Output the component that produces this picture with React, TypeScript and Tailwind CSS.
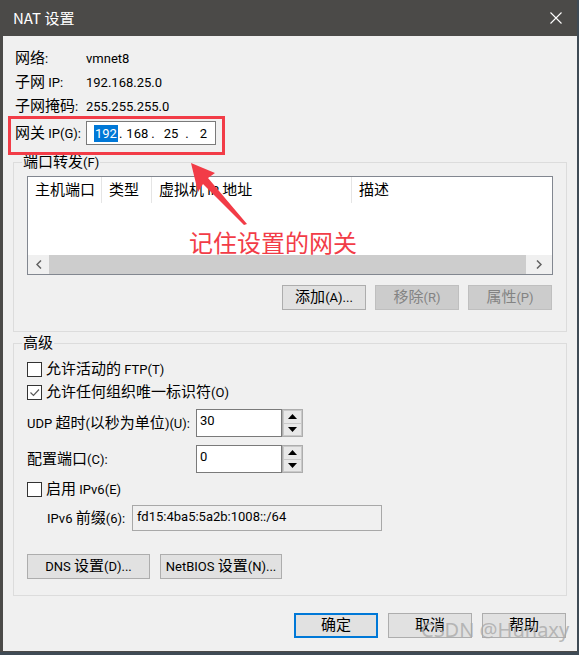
import React from "react";

const ui = "font-['Roboto','Noto_Sans_CJK_SC',sans-serif] text-[13px] leading-[17px] text-black";

// CJK runs render a bit larger than the Latin ones, as in the Windows UI font;
// a zero line-height keeps them from growing the line box
function T({ children }: { children: string }) {
  return (
    <>
      {children.split(/([\u4e00-\u9fff]+)/).map((s, i) =>
        /[\u4e00-\u9fff]/.test(s) ? (
          <span key={i} className="font-['Noto_Sans_CJK_SC',sans-serif] text-[15px] leading-[0px]">
            {s}
          </span>
        ) : (
          s
        )
      )}
    </>
  );
}

function Button({
  children,
  disabled,
  primary,
  className = "w-[84px]",
}: {
  children: string;
  disabled?: boolean;
  primary?: boolean;
  className?: string;
}) {
  const look = primary
    ? "border-2 border-[#0078d7] bg-[#e1e1e1] text-black"
    : disabled
    ? "border border-[#bfbfbf] bg-[#cccccc] text-[#838383]"
    : "border border-[#adadad] bg-[#e1e1e1] text-black";
  return (
    <div className={`flex h-[25px] items-center justify-center ${look} ${className}`}>
      <span>
        <T>{children}</T>
      </span>
    </div>
  );
}

function Checkbox({ checked, label }: { checked?: boolean; label: string }) {
  return (
    <div className="flex h-[20px] items-center">
      <span className="flex h-[15px] w-[15px] shrink-0 items-center justify-center border border-[#333333] bg-white">
        {checked && (
          <svg width="11" height="11" viewBox="0 0 11 11">
            <polyline points="1.5,5.5 4.5,8.5 10,2.5" fill="none" stroke="#5a5a5a" strokeWidth="1.2" />
          </svg>
        )}
      </span>
      <span className="ml-[4px]">
        <T>{label}</T>
      </span>
    </div>
  );
}

function Spin({ value }: { value: string }) {
  return (
    <div className="flex h-[28px]">
      <div className="w-[86px] border border-[#7a7a7a] bg-white pl-[3px] pt-[2px]">{value}</div>
      <div className="flex w-[21px] flex-col gap-[1px] border border-[#adadad] bg-[#c9c9c9] p-[1px]">
        <div className="flex flex-1 items-center justify-center bg-[#e8e8e8]">
          <svg width="9" height="5" viewBox="0 0 9 5">
            <polygon points="4.5,0 9,5 0,5" fill="#000" />
          </svg>
        </div>
        <div className="flex flex-1 items-center justify-center bg-[#e8e8e8]">
          <svg width="9" height="5" viewBox="0 0 9 5">
            <polygon points="0,0 9,0 4.5,5" fill="#000" />
          </svg>
        </div>
      </div>
    </div>
  );
}

export default function App() {
  const info = [
    ["网络:", "vmnet8"],
    ["子网 IP:", "192.168.25.0"],
    ["子网掩码:", "255.255.255.0"],
  ];

  const columns = [
    ["主机端口", "w-[74px]"],
    ["类型", "w-[50px]"],
    ["虚拟机 IP 地址", "w-[200px]"],
  ];

  return (
    <div className={`relative h-[655px] w-[579px] overflow-hidden bg-[#3f4b55] ${ui}`}>
      <div className="flex h-[652px] w-[577px] flex-col bg-[#4b4a48]">
        {/* title bar */}
        <div className="flex h-[36px] shrink-0 items-center justify-between pl-[13px] pr-[15px]">
          <span className="font-['Noto_Sans_CJK_SC',sans-serif] text-[15px] leading-[20px] text-white">NAT 设置</span>
          <svg width="12" height="12" viewBox="0 0 12 12">
            <path d="M0.5 0.5 L11.5 11.5 M11.5 0.5 L0.5 11.5" stroke="#ffffff" strokeWidth="1.1" />
          </svg>
        </div>

        {/* body */}
        <div className="mb-[1px] ml-[3px] flex flex-1 flex-col bg-[#f0f0f0] px-[10px] pt-[10px]">
          <div className="pl-[2px]">
            {info.map(([k, v]) => (
              <div key={k} className="flex h-[24px] items-center">
                <span className="w-[71px]">
                  <T>{k}</T>
                </span>
                <span>{v}</span>
              </div>
            ))}
            <div className="mt-[3px] flex h-[24px] items-center">
              <span className="w-[71px]">
                <T>网关 IP(G):</T>
              </span>
              <div className="flex h-[24px] w-[130px] items-center border border-[#7a7a7a] bg-white">
                <span className="ml-[7px] bg-[#0078d7] px-[1px] text-white">192</span>
                <span className="ml-[1px]">.</span>
                <span className="ml-[4px]">168</span>
                <span className="ml-[3px]">.</span>
                <span className="ml-[9px]">25</span>
                <span className="ml-[7px]">.</span>
                <span className="ml-[11px]">2</span>
              </div>
            </div>
          </div>

          {/* port forwarding */}
          <fieldset className="mt-[9px] border border-[#dcdcdc] p-0">
            <legend className="ml-[8px] px-[1px] leading-[17px]">
              <T>端口转发(F)</T>
            </legend>
            <div className="px-[13px] pb-[21px] pt-[5px]">
              <div className="flex h-[99px] flex-col border border-[#828790] bg-white">
                <div className="flex h-[26px]">
                  {columns.map(([t, w]) => (
                    <div key={t} className={`flex items-center border-r border-[#e5e5e5] pl-[7px] ${w}`}>
                      <span>
                        <T>{t}</T>
                      </span>
                    </div>
                  ))}
                  <div className="flex items-center pl-[7px]">
                    <span>
                      <T>描述</T>
                    </span>
                  </div>
                </div>
                <div className="flex-1" />
                <div className="flex h-[19px] bg-[#f0f0f0]">
                  <div className="flex w-[21px] items-center justify-center">
                    <svg width="6" height="9" viewBox="0 0 6 9">
                      <polyline points="5,0.5 1,4.5 5,8.5" fill="none" stroke="#606060" strokeWidth="1.5" />
                    </svg>
                  </div>
                  <div className="flex-1 bg-[#cdcdcd]" />
                  <div className="flex w-[26px] items-center justify-center">
                    <svg width="6" height="9" viewBox="0 0 6 9">
                      <polyline points="1,0.5 5,4.5 1,8.5" fill="none" stroke="#606060" strokeWidth="1.5" />
                    </svg>
                  </div>
                </div>
              </div>
              <div className="mt-[10px] flex justify-end gap-[9px] pr-[1px]">
                <Button>添加(A)...</Button>
                <Button disabled>移除(R)</Button>
                <Button disabled>属性(P)</Button>
              </div>
            </div>
          </fieldset>

          {/* advanced */}
          <fieldset className="mt-[3px] border border-[#dcdcdc] p-0">
            <legend className="ml-[8px] px-[1px] leading-[17px]">
              <T>高级</T>
            </legend>
            <div className="px-[13px] pb-[16px] pt-[7px]">
              <Checkbox label="允许活动的 FTP(T)" />
              <div className="mt-[3px]">
                <Checkbox checked label="允许任何组织唯一标识符(O)" />
              </div>
              <div className="mt-[7px] flex items-center">
                <span className="w-[169px]">
                  <T>UDP 超时(以秒为单位)(U):</T>
                </span>
                <Spin value="30" />
              </div>
              <div className="mt-[8px] flex items-center">
                <span className="w-[169px]">
                  <T>配置端口(C):</T>
                </span>
                <Spin value="0" />
              </div>
              <div className="mt-[6px]">
                <Checkbox label="启用 IPv6(E)" />
              </div>
              <div className="mt-[6px] flex items-center pl-[20px]">
                <span className="w-[85px]">
                  <T>IPv6 前缀(6):</T>
                </span>
                <div className="h-[26px] w-[250px] border border-[#a8a8a8] bg-[#f0f0f0] pl-[4px] pt-[2px]">
                  fd15:4ba5:5a2b:1008::/64
                </div>
              </div>
              <div className="mt-[23px] flex gap-[10px]">
                <Button className="w-[123px]">DNS 设置(D)...</Button>
                <Button className="w-[122px]">NetBIOS 设置(N)...</Button>
              </div>
            </div>
          </fieldset>

          {/* dialog buttons */}
          <div className="mt-[17px] flex justify-end gap-[10px] pr-[1px]">
            <Button primary>确定</Button>
            <Button>取消</Button>
            <Button>帮助</Button>
          </div>
        </div>
      </div>

      {/* annotation overlays */}
      <div className="pointer-events-none absolute left-[8px] top-[116px] h-[39px] w-[217px] border-[3px] border-[#f23c47]" />
      <svg className="pointer-events-none absolute left-0 top-0" width="579" height="655">
        <polygon points="191,163 215,173 208,178 247,224 244,225 203,184 198,192" fill="#f23c47" />
      </svg>
      <div className="pointer-events-none absolute left-[189px] top-[228px] font-['Noto_Sans_CJK_SC',sans-serif] text-[24px] leading-[28px] text-[#f23c47]">
        记住设置的网关
      </div>
      <div className="pointer-events-none absolute left-[421px] top-[616px] font-['Noto_Sans',sans-serif] text-[20px] leading-[28px] text-[#a9a9a9]/80">
        CSDN @Hunaxy
      </div>
    </div>
  );
}
